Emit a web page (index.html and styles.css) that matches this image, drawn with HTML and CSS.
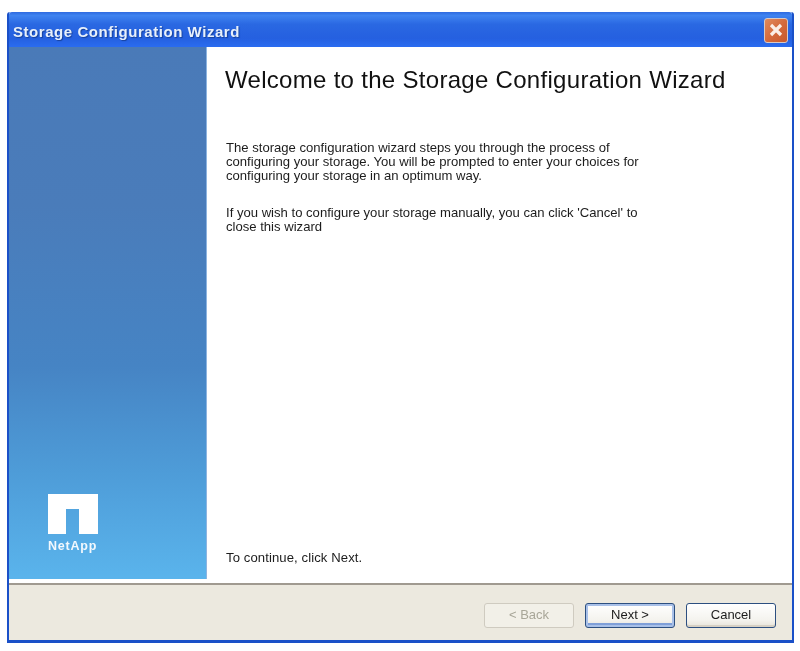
FILE: index.html
```html
<!DOCTYPE html>
<html>
  <head>
    <meta name="viewport" content="width=device-width, initial-scale=1.0">
    <title>Storage Configuration Wizard</title>
    <link rel="stylesheet" href="styles.css">
  </head>
  <body>
    <div class="wizard">
      <div class="titleBar">
        <span class="titleText">Storage Configuration Wizard</span>
        <div class="closeBtn">
          <svg width="14" height="14" viewBox="0 0 14 14">
            <path d="M2 2 L12 12 M12 2 L2 12" stroke="#fbeee6" stroke-width="3.2" fill="none"/>
          </svg>
        </div>
      </div>
      <div class="wizardBody">
        <div class="sidebar">
          <svg class="logoMark" width="50" height="40" viewBox="0 0 50 40">
            <path d="M0 0 H50 V40 H31 V15 H18 V40 H0 Z" fill="#fff"/>
          </svg>
          <span class="logoText">NetApp</span>
        </div>
        <div class="content">
          <h1>Welcome to the Storage Configuration Wizard</h1>
          <p>The storage configuration wizard steps you through the process of<br>configuring your storage. You will be prompted to enter your choices for<br>configuring your storage in an optimum way.</p>
          <p>If you wish to configure your storage manually, you can click 'Cancel' to<br>close this wizard</p>
          <p class="continueText">To continue, click Next.</p>
        </div>
      </div>
      <div class="footer">
        <button class="btn btnDisabled">&lt; Back</button>
        <button class="btn btnDefault">Next &gt;</button>
        <button class="btn btnCancel">Cancel</button>
      </div>
    </div>
  </body>
</html>
```

FILE: styles.css
```css
html {
  background-color: #fff;
  font-family: 'Liberation Sans', Arial, sans-serif;
}
body {
  margin: 0;
  padding: 12px 0 0 7px;
  height: 651px;
  box-sizing: border-box;
  overflow: hidden;
}
.wizard {
  width: 787px;
  height: 631px;
  display: flex;
  flex-direction: column;
  box-sizing: border-box;
  border: solid #1a50c8;
  border-width: 0 2px 3px 2px;
  border-radius: 3px 3px 0 0;
  background-color: #fff;
  filter: blur(0.6px);
}
.titleBar {
  height: 35px;
  flex: none;
  display: flex;
  align-items: center;
  justify-content: space-between;
  box-sizing: border-box;
  padding: 1px 4px 0 4px;
  background: linear-gradient(to bottom, #2f6ae0 0%, #3f83f0 10%, #2a68e2 35%, #2560e0 75%, #2a6cf0 100%);
  border-radius: 3px 3px 0 0;
}
.titleText {
  color: #e8f0fb;
  font-size: 15px;
  font-weight: bold;
  letter-spacing: 0.55px;
  padding-top: 2px;
  text-shadow: 1px 1px 1px #16409a;
}
.closeBtn {
  width: 24px;
  height: 25px;
  display: flex;
  align-items: center;
  justify-content: center;
  box-sizing: border-box;
  border: 1px solid #d9c9c4;
  border-radius: 3px;
  background: linear-gradient(135deg, #e08a5c 0%, #d4683a 55%, #c85a2e 100%);
}
.wizardBody {
  flex: 1;
  display: flex;
  min-height: 0;
}
.sidebar {
  width: 198px;
  flex: none;
  display: flex;
  flex-direction: column;
  justify-content: flex-end;
  box-sizing: border-box;
  padding: 0 0 26px 39px;
  margin-bottom: 4px;
  border-right: 1px solid #8db4e0;
  background: linear-gradient(to bottom, #4a7ab8 0%, #4a7cba 30%, #4684c4 60%, #4e9cd8 80%, #5ab4ec 100%);
}
.logoText {
  color: #f2f8fd;
  font-size: 12.5px;
  line-height: 14px;
  font-weight: bold;
  letter-spacing: 0.8px;
  margin-top: 5px;
}
.logoMark {
  display: block;
}
.content {
  flex: 1;
  display: flex;
  flex-direction: column;
  padding: 20px 0 18px 19px;
  color: #1c1c1c;
  font-size: 13.1px;
  line-height: 14px;
}
.content h1 {
  margin: 0 0 48px -1px;
  font-size: 24px;
  line-height: 26px;
  font-weight: normal;
  color: #111;
  letter-spacing: 0.3px;
}
.content p {
  margin: 0 0 23px 0;
}
.content .continueText {
  margin: auto 0 0 0;
  letter-spacing: 0.1px;
}
.footer {
  height: 57px;
  flex: none;
  display: flex;
  justify-content: flex-end;
  align-items: flex-start;
  gap: 11px;
  box-sizing: border-box;
  padding: 18px 16px 0 0;
  background-color: #ece9df;
  border-top: 2px solid #a09a90;
}
.btn {
  width: 90px;
  height: 25px;
  padding: 0 0 2px 0;
  font-family: inherit;
  font-size: 13px;
  color: #1c1c1c;
  border-radius: 3px;
  background: linear-gradient(to bottom, #fff 0%, #f4f3ee 70%, #e6e3da 100%);
}
.btnDefault {
  border: 1px solid #2c4f80;
  box-shadow: inset 0 0 0 2px #a8c0e8, inset 0 -2px 0 2px #7f9fd8;
}
.btnCancel {
  border: 1px solid #2c4f80;
  box-shadow: inset 0 -2px 0 #d6d0c4;
}
.btnDisabled {
  border: 1px solid #cfcbc0;
  background: #f2f0e8;
  color: #a8a698;
}
```
